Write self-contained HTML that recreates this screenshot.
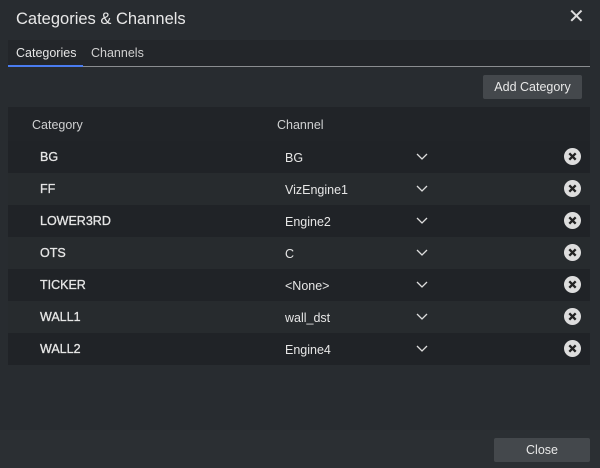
<!DOCTYPE html>
<html><head><style>
body{margin:0;width:600px;height:468px;background:#282c30;font-family:"Liberation Sans",sans-serif;color:#e6e6e6;position:relative;overflow:hidden}
.title{position:absolute;left:16px;top:10px;font-size:16.5px;color:#e8e8e8}
.x{position:absolute;left:568px;top:4px;font-size:20px;color:#ddd}
.tabs{position:absolute;left:8px;top:40px;width:582px;height:26px;background:#23262a;border-bottom:1px solid #8a8d90}
.tab{position:absolute;top:6px;font-size:12.5px}
.ul{position:absolute;left:8px;top:65px;width:75px;height:2px;background:#4a7cf0}
.btn{position:absolute;background:#44484c;border-radius:2px;font-size:12.5px;text-align:center;color:#e8e8e8}
.tbl{position:absolute;left:8px;top:107px;width:582px}
.hd{height:34px;background:#212428;position:relative;font-size:12.5px;color:#cfd0d1}
.row{height:32px;position:relative;font-size:12.5px}
.d{background:#202327}.l{background:#272b2e}
.c1{position:absolute;left:32px;top:9px;-webkit-text-stroke:0.3px #e6e6e6}
.c2{position:absolute;left:277px;top:10px}
.ch{position:absolute;left:408px;top:9px}
.del{position:absolute;left:556px;top:7px;width:17px;height:17px;border-radius:50%;background:#ddd}
.foot{position:absolute;left:0;top:430px;width:600px;height:38px;background:#2b2f33}
</style></head><body>
<div class="title">Categories &amp; Channels</div>
<div class="x">✕</div>
<div class="tabs"><span class="tab" style="left:8px">Categories</span><span class="tab" style="left:83px;color:#d0d0d0">Channels</span></div>
<div class="ul"></div>
<div class="btn" style="left:483px;top:75px;width:99px;height:24px;line-height:24px">Add Category</div>
<div class="tbl">
<div class="hd"><span style="position:absolute;left:24px;top:11px">Category</span><span style="position:absolute;left:269px;top:11px">Channel</span></div>
<div class="row d"><span class="c1">BG</span><span class="c2">BG</span><svg class="ch" width="12" height="12"><path d="M1 4l5 5 5-5" stroke="#ddd" fill="none" stroke-width="1.3"/></svg><svg class="del" viewBox="0 0 16 16"><path d="M5 5l6 6M11 5l-6 6" stroke="#222" stroke-width="2.2"/></svg></div>
<div class="row l"><span class="c1">FF</span><span class="c2">VizEngine1</span><svg class="ch" width="12" height="12"><path d="M1 4l5 5 5-5" stroke="#ddd" fill="none" stroke-width="1.3"/></svg><svg class="del" viewBox="0 0 16 16"><path d="M5 5l6 6M11 5l-6 6" stroke="#222" stroke-width="2.2"/></svg></div>
<div class="row d"><span class="c1">LOWER3RD</span><span class="c2">Engine2</span><svg class="ch" width="12" height="12"><path d="M1 4l5 5 5-5" stroke="#ddd" fill="none" stroke-width="1.3"/></svg><svg class="del" viewBox="0 0 16 16"><path d="M5 5l6 6M11 5l-6 6" stroke="#222" stroke-width="2.2"/></svg></div>
<div class="row l"><span class="c1">OTS</span><span class="c2">C</span><svg class="ch" width="12" height="12"><path d="M1 4l5 5 5-5" stroke="#ddd" fill="none" stroke-width="1.3"/></svg><svg class="del" viewBox="0 0 16 16"><path d="M5 5l6 6M11 5l-6 6" stroke="#222" stroke-width="2.2"/></svg></div>
<div class="row d"><span class="c1">TICKER</span><span class="c2">&lt;None&gt;</span><svg class="ch" width="12" height="12"><path d="M1 4l5 5 5-5" stroke="#ddd" fill="none" stroke-width="1.3"/></svg><svg class="del" viewBox="0 0 16 16"><path d="M5 5l6 6M11 5l-6 6" stroke="#222" stroke-width="2.2"/></svg></div>
<div class="row l"><span class="c1">WALL1</span><span class="c2">wall_dst</span><svg class="ch" width="12" height="12"><path d="M1 4l5 5 5-5" stroke="#ddd" fill="none" stroke-width="1.3"/></svg><svg class="del" viewBox="0 0 16 16"><path d="M5 5l6 6M11 5l-6 6" stroke="#222" stroke-width="2.2"/></svg></div>
<div class="row d"><span class="c1">WALL2</span><span class="c2">Engine4</span><svg class="ch" width="12" height="12"><path d="M1 4l5 5 5-5" stroke="#ddd" fill="none" stroke-width="1.3"/></svg><svg class="del" viewBox="0 0 16 16"><path d="M5 5l6 6M11 5l-6 6" stroke="#222" stroke-width="2.2"/></svg></div>
</div>
<div class="foot"></div>
<div class="btn" style="left:494px;top:438px;width:96px;height:24px;line-height:24px">Close</div>
</body></html>
